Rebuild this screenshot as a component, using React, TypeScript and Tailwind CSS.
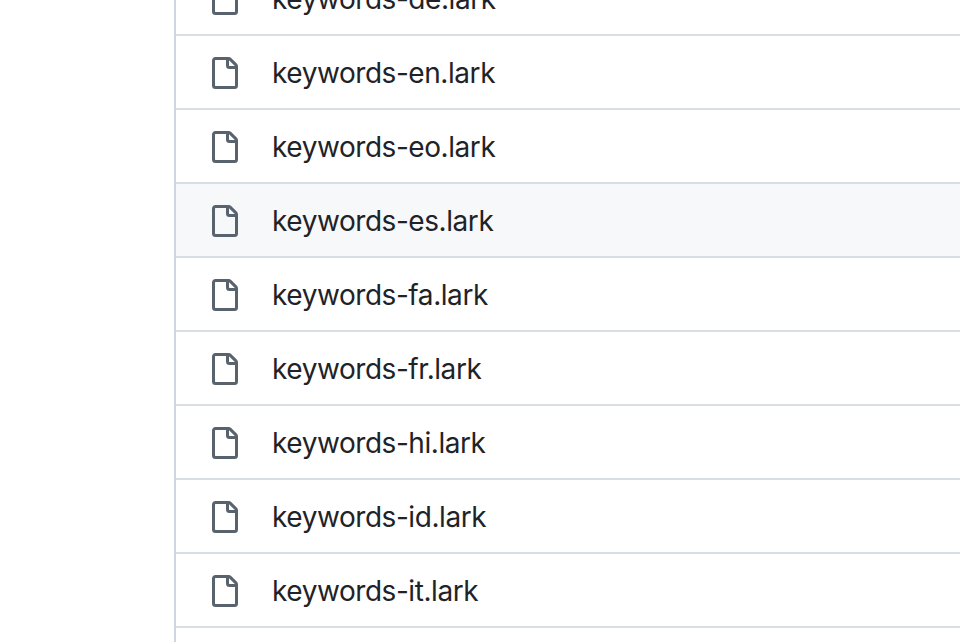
const files = [
  { name: "keywords-de.lark" },
  { name: "keywords-en.lark" },
  { name: "keywords-eo.lark" },
  { name: "keywords-es.lark", hovered: true },
  { name: "keywords-fa.lark" },
  { name: "keywords-fr.lark" },
  { name: "keywords-hi.lark" },
  { name: "keywords-id.lark" },
  { name: "keywords-it.lark" },
  { name: "keywords-ja.lark" },
]

function FileIcon() {
  return (
    <svg viewBox="0 0 16 16" className="mt-[2px] h-8 w-8 shrink-0 fill-[#59636e]">
      <path d="M2 1.75C2 .784 2.784 0 3.75 0h6.586c.464 0 .909.184 1.237.513l2.914 2.914c.329.328.513.773.513 1.237v9.586A1.75 1.75 0 0 1 13.25 16h-9.5A1.75 1.75 0 0 1 2 14.25Zm1.75-.25a.25.25 0 0 0-.25.25v12.5c0 .138.112.25.25.25h9.5a.25.25 0 0 0 .25-.25V6h-2.75A1.75 1.75 0 0 1 9 4.25V1.5Zm6.75.062V4.25c0 .138.112.25.25.25h2.688l-.011-.013-2.914-2.914-.013-.011Z" />
    </svg>
  )
}

export default function App() {
  return (
    <div className="h-[642px] w-[960px] overflow-hidden bg-white font-['Inter',sans-serif]">
      <div className="ml-[174px] mt-[-38px] border-l-2 border-[#d1d5e0]">
        {files.map((file) => (
          <div
            key={file.name}
            className={`flex h-[74px] items-center gap-8 border-b-2 border-[#d8dee4] pl-8 text-[28px] tracking-[-0.44px] text-[#1f2328] ${
              file.hovered ? "bg-[#f6f8fa]" : "bg-white"
            }`}
          >
            <FileIcon />
            <span className="mt-[2px]">{file.name}</span>
          </div>
        ))}
      </div>
    </div>
  )
}
